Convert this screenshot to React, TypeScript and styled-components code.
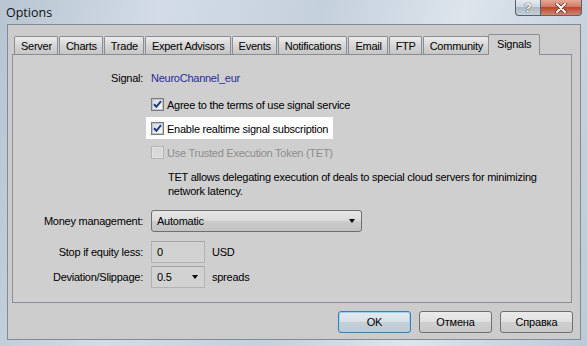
import React from "react";
import styled, { createGlobalStyle, css } from "styled-components";

const GlobalStyle = createGlobalStyle`
  html, body { margin: 0; padding: 0; overflow: hidden; }
  body { font-family: "Liberation Sans", Arial, sans-serif; }
  * { box-sizing: border-box; }
`;

const Window = styled.div`
  width: 587px;
  height: 346px;
  display: flex;
  flex-direction: column;
  background: linear-gradient(100deg, #b7c5d2 0%, #d3dce6 25%, #c4d0dc 50%, #dde4ec 72%, #bccad8 100%);
`;

const TitleBar = styled.div`
  height: 24px;
  flex: none;
  display: flex;
  align-items: flex-start;
  padding: 0 5px 0 6px;
`;

const Title = styled.div`
  font-family: "Open Sans", "Noto Sans", sans-serif;
  font-size: 12.5px;
  line-height: 16px;
  margin-top: 5px;
  color: #111;
`;

const CaptionGroup = styled.div`
  margin-left: auto;
  display: flex;
`;

const CaptionButton = styled.div<{ $variant: "help" | "close" }>`
  height: 16px;
  display: flex;
  align-items: center;
  justify-content: center;
  border: 1px solid #56626e;
  border-top: none;
  font-family: "Liberation Sans", Arial, sans-serif;
  font-weight: bold;
  font-size: 12px;
  color: #fff;
  text-shadow: 0 0 1px #333, 0 0 1px #333;
  ${(p) =>
    p.$variant === "help"
      ? css`
          width: 25px;
          border-radius: 0 0 0 4px;
          border-right: none;
          background: linear-gradient(#e4eaf0, #cdd6df 45%, #aeb9c5 50%, #c5cfd9);
        `
      : css`
          width: 42px;
          border-radius: 0 0 4px 0;
          background: linear-gradient(#e6a898, #d27a66 45%, #bd4630 50%, #d0866e);
        `}
`;

const Client = styled.div`
  flex: 1;
  margin: 0 6px 6px 7px;
  border: 1px solid #7f8b97;
  background: #cccccc;
  display: flex;
  flex-direction: column;
`;

const TabStrip = styled.div`
  height: 29px;
  padding: 9px 0 0 6px;
  display: flex;
  align-items: flex-end;
  flex: none;
`;

const Tab = styled.div<{ $active?: boolean }>`
  height: 18px;
  padding: 0 5px 0 6px;
  margin-right: 1px;
  display: flex;
  align-items: center;
  font-size: 11px;
  letter-spacing: -0.25px;
  color: #000;
  border: 1px solid #8a8d94;
  border-bottom: none;
  border-radius: 2px 2px 0 0;
  background: linear-gradient(#ececec, #d6d6d6 50%, #c6c6c6);
  ${(p) =>
    p.$active &&
    css`
      height: 21px;
      margin: 0 0 -1px -2px;
      padding: 0 8px 3px;
      background: #cfcfcf;
      position: relative;
      z-index: 1;
    `}
`;

const Panel = styled.div`
  height: 249px;
  margin: 0 8px 0 4px;
  border: 1px solid #8a8d94;
  background: #cfcfcf;
  padding-top: 16px;
  display: flex;
  flex-direction: column;
`;

const Row = styled.div<{ $mt?: number }>`
  display: grid;
  grid-template-columns: 130px 1fr;
  column-gap: 8px;
  align-items: center;
  margin-top: ${(p) => p.$mt ?? 0}px;
`;

const Label = styled.div`
  text-align: right;
  font-size: 11px;
  letter-spacing: -0.25px;
  line-height: 14px;
  color: #000;
`;

const Text = styled.span<{ $color?: string }>`
  font-size: 11px;
  letter-spacing: -0.25px;
  line-height: 14px;
  color: ${(p) => p.$color ?? "#000"};
  white-space: nowrap;
`;

const CheckLine = styled.div<{ $highlight?: boolean }>`
  display: inline-flex;
  align-items: center;
  gap: 3px;
  height: 13px;
  justify-self: start;
  ${(p) =>
    p.$highlight &&
    css`
      height: 22px;
      margin-left: -5px;
      padding: 1px 5px 0 5px;
      background: #ffffff;
    `}
`;

const Box = styled.span<{ $disabled?: boolean }>`
  width: 13px;
  height: 13px;
  flex: none;
  display: flex;
  align-items: center;
  justify-content: center;
  border: 1px solid ${(p) => (p.$disabled ? "#b4b4b4" : "#7b7b7b")};
  background: ${(p) =>
    p.$disabled
      ? "#d9d9d9"
      : "linear-gradient(135deg, #cfd6de, #f4f6f8 70%, #ffffff)"};
  box-shadow: inset 0 0 0 1px ${(p) => (p.$disabled ? "#e2e2e2" : "#bcc5cf")};
`;

const Paragraph = styled.p`
  grid-column: 2;
  margin: 0;
  padding-left: 17px;
  width: 400px;
  font-size: 11px;
  letter-spacing: -0.25px;
  line-height: 14px;
  color: #000;
`;

const Inline = styled.div`
  display: flex;
  align-items: center;
  gap: 7px;
`;

const Combo = styled.div<{ $width: number; $flat?: boolean }>`
  width: ${(p) => p.$width}px;
  height: 22px;
  display: flex;
  align-items: center;
  padding: 0 6px 0 5px;
  font-size: 11px;
  letter-spacing: -0.25px;
  color: #000;
  ${(p) =>
    p.$flat
      ? css`
          border: 1px solid #b3b3b3;
          border-top-color: #a2a2a2;
          background: #d2d2d2;
        `
      : css`
          border: 1px solid #6f6f6f;
          border-radius: 3px;
          background: linear-gradient(#e6e6e6, #dcdcdc 48%, #cbcbcb 52%, #c3c3c3);
        `}
`;

const ComboText = styled.span`
  flex: 1;
`;

const Arrow = styled.span`
  width: 0;
  height: 0;
  border-left: 3.5px solid transparent;
  border-right: 3.5px solid transparent;
  border-top: 4px solid #000;
`;

const ButtonRow = styled.div`
  display: flex;
  justify-content: flex-end;
  gap: 8px;
  padding: 8px 7px 0 0;
`;

const Button = styled.div<{ $default?: boolean }>`
  width: 73px;
  height: 22px;
  display: flex;
  align-items: center;
  justify-content: center;
  font-size: 11px;
  letter-spacing: -0.2px;
  color: #000;
  border: 1px solid #707070;
  border-radius: 3px;
  background: linear-gradient(#ebebeb, #e0e0e0 48%, #cfcfcf 52%, #c8c8c8);
  ${(p) =>
    p.$default &&
    css`
      border-color: #3c7fb1;
      box-shadow: inset 0 0 0 1px #9fd0ee;
      background: linear-gradient(#e4ebf0, #d8e0e6 48%, #c6d0d8 52%, #bfc9d1);
    `}
`;

const Check = () => (
  <svg width="9" height="9" viewBox="0 0 9 9">
    <path d="M1 4.2 L3.4 6.8 L8 1.2" fill="none" stroke="#1d3c7d" strokeWidth="2" />
  </svg>
);

const CloseGlyph = () => (
  <svg width="14" height="10" viewBox="0 0 14 10">
    <path d="M3 1 L11 9 M11 1 L3 9" stroke="#5a2a20" strokeWidth="3.4" strokeLinecap="round" />
    <path d="M3 1 L11 9 M11 1 L3 9" stroke="#ffffff" strokeWidth="2" strokeLinecap="round" />
  </svg>
);

const tabs = [
  "Server",
  "Charts",
  "Trade",
  "Expert Advisors",
  "Events",
  "Notifications",
  "Email",
  "FTP",
  "Community",
  "Signals",
];

export default function App() {
  return (
    <>
      <GlobalStyle />
      <Window>
        <TitleBar>
          <Title>Options</Title>
          <CaptionGroup>
            <CaptionButton $variant="help">?</CaptionButton>
            <CaptionButton $variant="close">
              <CloseGlyph />
            </CaptionButton>
          </CaptionGroup>
        </TitleBar>
        <Client>
          <TabStrip>
            {tabs.map((t) => (
              <Tab key={t} $active={t === "Signals"}>
                {t}
              </Tab>
            ))}
          </TabStrip>
          <Panel>
            <Row>
              <Label>Signal:</Label>
              <Text $color="#1f2a9c">NeuroChannel_eur</Text>
            </Row>
            <Row $mt={13}>
              <span />
              <CheckLine>
                <Box>
                  <Check />
                </Box>
                <Text>Agree to the terms of use signal service</Text>
              </CheckLine>
            </Row>
            <Row $mt={6}>
              <span />
              <CheckLine $highlight>
                <Box>
                  <Check />
                </Box>
                <Text>Enable realtime signal subscription</Text>
              </CheckLine>
            </Row>
            <Row $mt={7}>
              <span />
              <CheckLine>
                <Box $disabled />
                <Text $color="#8d8d8d">Use Trusted Execution Token (TET)</Text>
              </CheckLine>
            </Row>
            <Row $mt={11}>
              <Paragraph>
                TET allows delegating execution of deals to special cloud servers for minimizing
                network latency.
              </Paragraph>
            </Row>
            <Row $mt={12}>
              <Label>Money management:</Label>
              <Combo $width={211}>
                <ComboText>Automatic</ComboText>
                <Arrow />
              </Combo>
            </Row>
            <Row $mt={9}>
              <Label>Stop if equity less:</Label>
              <Inline>
                <Combo $width={54} $flat>
                  <ComboText>0</ComboText>
                </Combo>
                <Text>USD</Text>
              </Inline>
            </Row>
            <Row $mt={3}>
              <Label>Deviation/Slippage:</Label>
              <Inline>
                <Combo $width={54} $flat>
                  <ComboText>0.5</ComboText>
                  <Arrow />
                </Combo>
                <Text>spreads</Text>
              </Inline>
            </Row>
          </Panel>
          <ButtonRow>
            <Button $default>OK</Button>
            <Button>Отмена</Button>
            <Button>Справка</Button>
          </ButtonRow>
        </Client>
      </Window>
    </>
  );
}
